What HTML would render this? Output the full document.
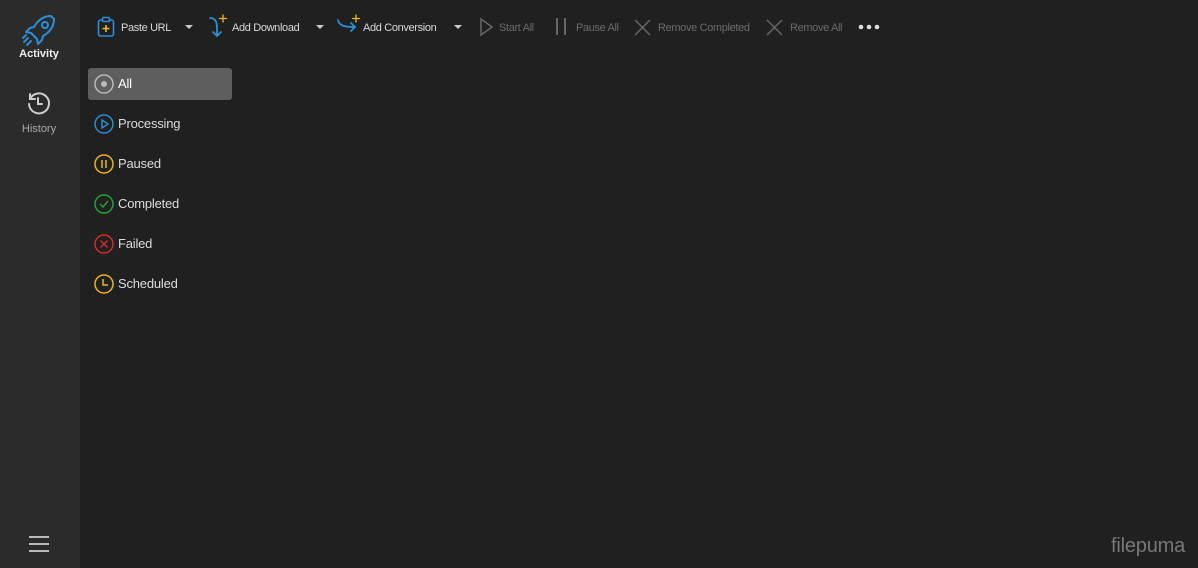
<!DOCTYPE html>
<html><head><meta charset="utf-8"><style>
*{margin:0;padding:0;box-sizing:border-box}
body{width:1198px;height:568px;background:#202020;font-family:"Liberation Sans",sans-serif;position:relative;overflow:hidden}
.side{position:absolute;left:0;top:0;width:80px;height:568px;background:#2b2b2b}
.abs{position:absolute}
.tb{position:absolute;top:21px;font-size:11px;color:#d8d8d8;line-height:14px;white-space:nowrap;letter-spacing:-0.35px}
.dis{color:#6a6a6a}
.item{position:absolute;left:118px;font-size:13px;color:#dcdcdc;line-height:16px;letter-spacing:-0.2px}
svg{position:absolute;overflow:visible}
</style></head><body>
<div class="side"></div>
<svg style="left:22px;top:14px" width="34" height="34" viewBox="0 0 34 34" fill="none" stroke="#2a8fd8" stroke-width="2" stroke-linejoin="round" stroke-linecap="round">
<path d="M29 2 C22 2 16 6 12 13 L8 14 L4 18 L9 19 L15 25 L16 30 L20 26 L21 22 C28 18 32 12 32 5 Z"/>
<circle cx="23" cy="11" r="3"/>
<path d="M6 24 L2 28 M9 27 L5 31 M4 21 L1 24"/>
</svg>
<div class="abs" style="left:0;top:48px;width:78px;text-align:center;font-size:11px;font-weight:bold;color:#eee">Activity</div>
<svg style="left:26px;top:90px" width="26" height="26" viewBox="0 0 26 26" fill="none" stroke="#cfcfcf" stroke-width="2" stroke-linecap="round">
<path d="M4 9 A10 10 0 1 1 3 14"/><path d="M4 4 L4 9 L9 9"/><path d="M12 8 L12 14 L16 14"/>
</svg>
<div class="abs" style="left:0;top:123px;width:78px;text-align:center;font-size:11px;color:#aaa">History</div>
<div class="abs" style="left:29px;top:536px;width:20px;height:2px;background:#bbb"></div>
<div class="abs" style="left:29px;top:543px;width:20px;height:2px;background:#bbb"></div>
<div class="abs" style="left:29px;top:550px;width:20px;height:2px;background:#bbb"></div>

<svg style="left:97px;top:16px" width="18" height="22" viewBox="0 0 18 22" fill="none" stroke-width="1.6">
<rect x="1.5" y="4" width="15" height="16" rx="2" stroke="#2a8fd8"/><rect x="5.5" y="1.5" width="7" height="4" rx="1" stroke="#2a8fd8" fill="#202020"/>
<path d="M9 9 V16 M5.5 12.5 H12.5" stroke="#f0b429"/></svg>
<div class="tb" style="left:121px">Paste URL</div>
<svg style="left:185px;top:25px" width="8" height="4"><path d="M0 0 H8 L4 4Z" fill="#ccc"/></svg>
<svg style="left:208px;top:14px" width="22" height="24" viewBox="0 0 22 24" fill="none" stroke-width="1.8" stroke-linecap="round">
<path d="M2 4 C8 4 9 9 9 14 V22 M5 18 L9 22 L13 18" stroke="#2a8fd8"/><path d="M15 1 V8 M11.5 4.5 H18.5" stroke="#f0b429" stroke-width="1.3"/></svg>
<div class="tb" style="left:232px">Add Download</div>
<svg style="left:316px;top:25px" width="8" height="4"><path d="M0 0 H8 L4 4Z" fill="#ccc"/></svg>
<svg style="left:337px;top:14px" width="24" height="24" viewBox="0 0 24 24" fill="none" stroke-width="1.8" stroke-linecap="round">
<path d="M1 6 C2 12 8 13 18 13 M14 9 L18 13 L14 17" stroke="#2a8fd8"/><path d="M19 1 V8 M15.5 4.5 H22.5" stroke="#f0b429" stroke-width="1.3"/></svg>
<div class="tb" style="left:363px">Add Conversion</div>
<svg style="left:454px;top:25px" width="8" height="4"><path d="M0 0 H8 L4 4Z" fill="#ccc"/></svg>
<svg style="left:480px;top:18px" width="14" height="18"><path d="M1 1 L12 9 L1 17 Z" fill="none" stroke="#666" stroke-width="1.5"/></svg>
<div class="tb dis" style="left:499px">Start All</div>
<div class="abs" style="left:556px;top:18px;width:2px;height:17px;background:#666"></div>
<div class="abs" style="left:564px;top:18px;width:2px;height:17px;background:#666"></div>
<div class="tb dis" style="left:576px">Pause All</div>
<svg style="left:634px;top:19px" width="17" height="17"><path d="M1 1 L16 16 M16 1 L1 16" stroke="#666" stroke-width="1.5"/></svg>
<div class="tb dis" style="left:658px">Remove Completed</div>
<svg style="left:766px;top:19px" width="17" height="17"><path d="M1 1 L16 16 M16 1 L1 16" stroke="#666" stroke-width="1.5"/></svg>
<div class="tb dis" style="left:790px">Remove All</div>
<svg style="left:858px;top:24px" width="22" height="6"><circle cx="3" cy="3" r="2.3" fill="#ddd"/><circle cx="11" cy="3" r="2.3" fill="#ddd"/><circle cx="19" cy="3" r="2.3" fill="#ddd"/></svg>

<div class="abs" style="left:88px;top:68px;width:144px;height:32px;background:#5e5e5e;border-radius:3px"></div>
<svg style="left:94px;top:74px" width="20" height="20"><circle cx="10" cy="10" r="9" fill="none" stroke="#bbb" stroke-width="1.5"/><circle cx="10" cy="10" r="3" fill="#bbb"/></svg>
<div class="item" style="top:76px;color:#fff">All</div>
<svg style="left:94px;top:114px" width="20" height="20"><circle cx="10" cy="10" r="9" fill="none" stroke="#2a8fd8" stroke-width="1.5"/><path d="M8 6 L14 10 L8 14Z" fill="none" stroke="#2a8fd8" stroke-width="1.4"/></svg>
<div class="item" style="top:116px">Processing</div>
<svg style="left:94px;top:154px" width="20" height="20"><circle cx="10" cy="10" r="9" fill="none" stroke="#e8b620" stroke-width="1.5"/><path d="M8 6 V14 M12 6 V14" stroke="#e8b620" stroke-width="1.5"/></svg>
<div class="item" style="top:156px">Paused</div>
<svg style="left:94px;top:194px" width="20" height="20"><circle cx="10" cy="10" r="9" fill="none" stroke="#22a33a" stroke-width="1.5"/><path d="M6 10 L9 13 L14 7" fill="none" stroke="#22a33a" stroke-width="1.5"/></svg>
<div class="item" style="top:196px">Completed</div>
<svg style="left:94px;top:234px" width="20" height="20"><circle cx="10" cy="10" r="9" fill="none" stroke="#d32a2a" stroke-width="1.5"/><path d="M6.5 6.5 L13.5 13.5 M13.5 6.5 L6.5 13.5" stroke="#d32a2a" stroke-width="1.5"/></svg>
<div class="item" style="top:236px">Failed</div>
<svg style="left:94px;top:274px" width="20" height="20"><circle cx="10" cy="10" r="9" fill="none" stroke="#e8b620" stroke-width="1.5"/><path d="M9 5 V11 H14" fill="none" stroke="#e8b620" stroke-width="1.5"/></svg>
<div class="item" style="top:276px">Scheduled</div>

<div class="abs" style="left:1111px;top:535px;font-size:20px;color:#777;letter-spacing:-0.2px">filepuma</div>
</body></html>
